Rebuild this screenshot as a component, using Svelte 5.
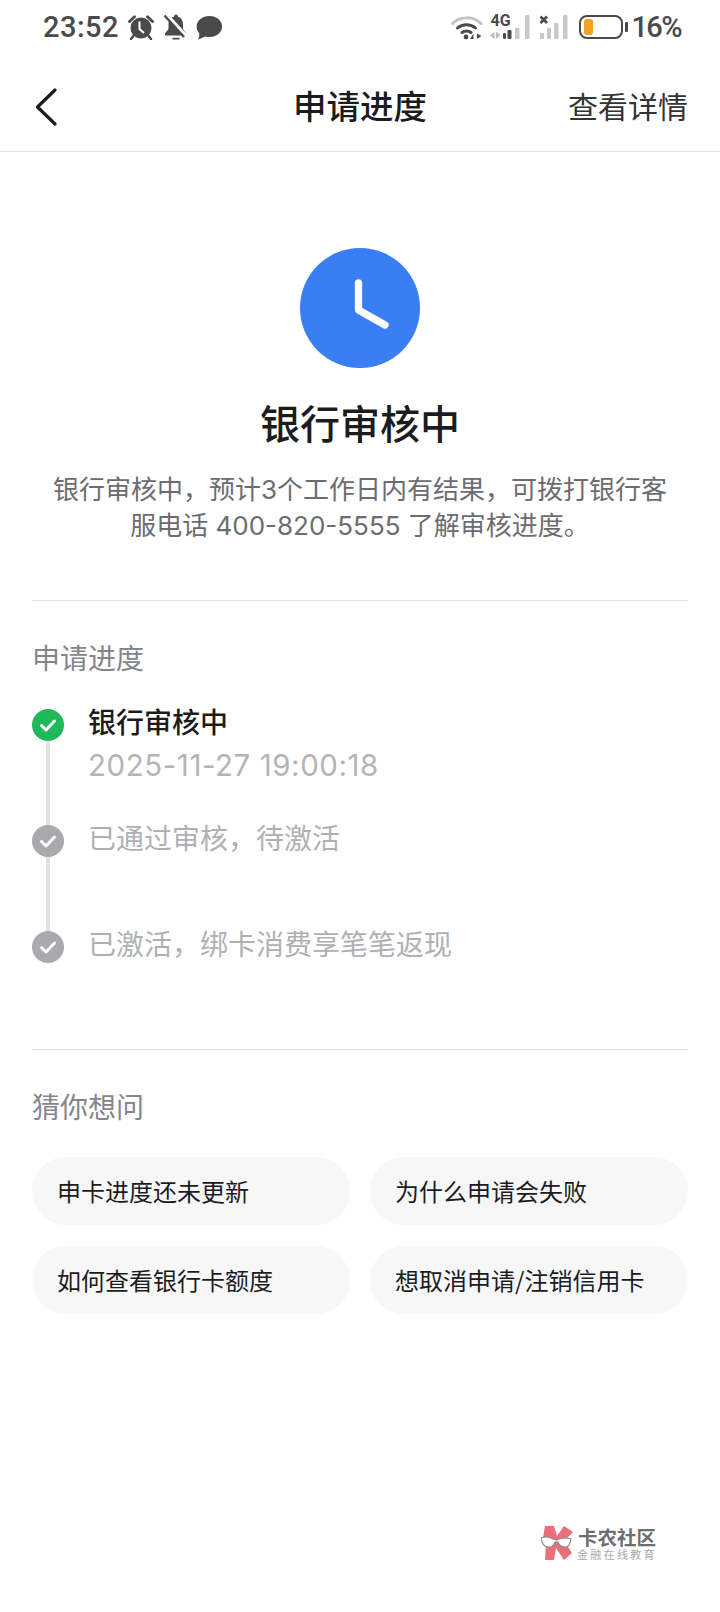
<script>
	const steps = [
		{ title: '银行审核中', time: '2025-11-27 19:00:18', active: true },
		{ title: '已通过审核，待激活', active: false },
		{ title: '已激活，绑卡消费享笔笔返现', active: false }
	];

	const questions = ['申卡进度还未更新', '为什么申请会失败', '如何查看银行卡额度', '想取消申请/注销信用卡'];
</script>

<div class="page">
	<div class="status">
		<div class="status-left">
			<span class="time">23:52</span>
			<svg class="ic-alarm" width="26" height="25" viewBox="0 0 26 25" fill="#4a4a4a">
				<circle cx="13" cy="13" r="10.500" />
				<path d="M1.500 6.500 6.500 1.800 M24.500 6.500 19.500 1.800" stroke="#4a4a4a" stroke-width="2.800" stroke-linecap="round" />
				<path d="M6 20 3 24 M20 20l3 4" stroke="#4a4a4a" stroke-width="2.400" stroke-linecap="round" />
				<path d="M11.500 6.500v7.500l4.500 4" stroke="#fff" stroke-width="2" fill="none" />
			</svg>
			<svg class="ic-bell" width="24" height="26" viewBox="0 0 24 26" fill="#4a4a4a">
				<circle cx="13" cy="2.500" r="2" />
				<path d="M13 2.500c-4.500 0-7.500 3.500-7.500 8v4.500L2 19.500v2h21v-2l-3-4.500v-4.500c0-4.500-2.500-8-7-8z" />
				<path d="M9.500 23.800h7v1.700h-7z" />
				<path d="M4 1 23 22" stroke="#fff" stroke-width="3.600" />
				<path d="M1.500 1.500 21 23" stroke="#4a4a4a" stroke-width="2.400" />
			</svg>
			<svg class="ic-chat" width="26" height="25" viewBox="0 0 26 25" fill="#4a4a4a">
				<path d="M13.500 1C20.500 1 26 5.300 26 11.500S20.500 22 13.500 22c-1.500 0-2.900-.2-4.200-.6L2 24.800c1.100-2.300 1.500-4.600 1.200-6.600C1.300 16.300 .6 14 .6 11.500.6 5.300 6.500 1 13.500 1z" />
			</svg>
		</div>
		<div class="status-right">
			<svg class="wifi" width="32" height="26" viewBox="0 0 32 26" fill="none" stroke-linecap="round">
				<path d="M1.500 9.500C8.500 2.500 22 1.500 30 9.500" stroke="#c2c2c2" stroke-width="3" />
				<path d="M6.500 14c5-4.500 13-4.500 18 0" stroke="#4a4a4a" stroke-width="3" />
				<path d="M11 18.500c2.500-2 6.500-2 9 0" stroke="#4a4a4a" stroke-width="3" />
				<circle cx="15" cy="23" r="2.400" fill="#4a4a4a" />
				<path d="M22.500 19.500 19 25h3.500zM26 19.500V25l4.500-3z" fill="#4a4a4a" />
			</svg>
			<div class="signal">
				<span class="net">4G</span>
				<svg width="42" height="26" viewBox="0 0 42 26">
					<path d="M1 21.500 5.500 17.500v7.500zM7 17.500v7.500l4.500-4z" fill="#bdbdbd" />
					<rect x="14" y="19" width="3" height="6" rx="1" fill="#4a4a4a" />
					<rect x="18.500" y="16" width="4" height="9" rx="1" fill="#4a4a4a" />
					<rect x="26" y="14" width="4.500" height="11" rx="1" fill="#c8c8c8" />
					<rect x="36" y="1" width="4.500" height="24" rx="1" fill="#c8c8c8" />
				</svg>
			</div>
			<svg class="sim2" width="30" height="26" viewBox="0 0 30 26" fill="#c8c8c8">
				<path d="M1.500 2.500l6.500 6.500M8 2.500l-6.500 6.500" stroke="#4a4a4a" stroke-width="2.600" />
				<rect x="1" y="19" width="4" height="6" rx="1" />
				<rect x="8" y="14" width="4" height="11" rx="1" />
				<rect x="15" y="9" width="4.500" height="16" rx="1" />
				<rect x="24" y="1" width="4.500" height="24" rx="1" />
			</svg>
			<div class="battery">
				<div class="battery-body"><div class="battery-fill"></div></div>
				<div class="battery-tip"></div>
			</div>
			<span class="percent">16%</span>
		</div>
	</div>

	<header class="nav">
		<svg class="back" width="22" height="38" viewBox="0 0 22 38" fill="none">
			<path d="M20 2 2.500 19 20 36" stroke="#1c1c1e" stroke-width="3.200" stroke-linecap="round" stroke-linejoin="round" />
		</svg>
		<h1>申请进度</h1>
		<span class="detail">查看详情</span>
	</header>

	<section class="result">
		<svg class="clock" width="120" height="120" viewBox="0 0 120 120">
			<circle cx="60" cy="60" r="60" fill="#3a7ef3" />
			<path d="M58.500 35v27l26.500 15" fill="none" stroke="#fff" stroke-width="7.300" stroke-linecap="round" stroke-linejoin="round" />
		</svg>
		<h2>银行审核中</h2>
		<p>银行审核中，预计3个工作日内有结果，可拨打银行客服电话 400-820-5555 了解审核进度。</p>
	</section>

	<section class="progress">
		<div class="label">申请进度</div>
		<ol class="steps">
			{#each steps as step, i}
				<li class="step" class:is-active={step.active}>
					<div class="rail">
						<svg width="32" height="32" viewBox="0 0 32 32">
							<circle cx="16" cy="16" r="16" fill={step.active ? '#1fb95a' : '#a9a9ae'} />
							<path d="M9.500 16.500l4.500 4.500 8.500-9" fill="none" stroke="#fff" stroke-width="3" stroke-linecap="round" stroke-linejoin="round" />
						</svg>
						{#if i < steps.length - 1}
							<div class="line"></div>
						{/if}
					</div>
					<div class="body">
						<div class="title">{step.title}</div>
						{#if step.time}
							<div class="stamp">{step.time}</div>
						{/if}
					</div>
				</li>
			{/each}
		</ol>
	</section>

	<section class="faq">
		<div class="label">猜你想问</div>
		<div class="chips">
			{#each questions as q}
				<div class="chip">{q}</div>
			{/each}
		</div>
	</section>

	<div class="mark">
		<svg width="34" height="36" viewBox="0 0 34 36">
			<path d="M4 1h9l3 10 7-10 9 6-9 9 8 12-8 7-8-12-2 12H4l1-15L2 13z" fill="#ea6f7a" />
			<path d="M0 13c5-2 9-1 12 1l4 1c3-2 8-3 14-1-1 5-2 8-6 8-4 0-6-2-7-5h-3c-1 3-3 6-7 5-4 0-6-4-7-9z" fill="#fff" stroke="#8c8c8c" stroke-width="1.200" />
		</svg>
		<div class="mark-text">
			<span class="mark-name">卡农社区</span>
			<span class="mark-sub">金融在线教育</span>
		</div>
	</div>
</div>

<style>
	:global(body) {
		margin: 0;
		background: #fff;
	}

	.page {
		position: relative;
		height: 1612px;
		overflow: hidden;
		background: #fff;
		font-family: 'Noto Sans CJK SC', 'Noto Sans', sans-serif;
		color: #1c1c1e;
	}

	.status {
		display: flex;
		justify-content: space-between;
		align-items: center;
		height: 54px;
		padding: 0 39px 0 43px;
	}
	.status-left,
	.status-right {
		display: flex;
		align-items: center;
	}
	.status-left {
		gap: 9px;
	}
	.time,
	.percent {
		font-family: Roboto, sans-serif;
		font-size: 29px;
		font-weight: 500;
		color: #4a4a4a;
	}
	.time {
		letter-spacing: 0.5px;
	}
	.percent {
		margin-left: 3px;
		letter-spacing: -1.600px;
	}
	.signal {
		position: relative;
		display: flex;
		margin-left: 6px;
	}
	.net {
		position: absolute;
		left: 1px;
		top: -3px;
		font-family: Roboto, sans-serif;
		font-size: 16px;
		font-weight: 700;
		color: #4a4a4a;
	}
	.sim2 {
		margin-left: 8px;
	}
	.battery {
		display: flex;
		align-items: center;
		gap: 2px;
		margin-left: 10px;
	}
	.battery-body {
		box-sizing: border-box;
		width: 44px;
		height: 24px;
		padding: 2px 3px;
		border: 2px solid #4a4a4a;
		border-radius: 8px;
	}
	.battery-fill {
		width: 9px;
		height: 100%;
		background: #f5a124;
		border-radius: 3px;
	}
	.battery-tip {
		width: 3px;
		height: 10px;
		background: #4a4a4a;
		border-radius: 1px;
	}

	.nav {
		display: grid;
		grid-template-columns: 1fr auto 1fr;
		align-items: center;
		box-sizing: border-box;
		height: 98px;
		padding: 4px 32px 0;
		border-bottom: 1px solid #e4e4e6;
	}
	.back {
		margin: 5px 0 0 3px;
	}
	.nav h1 {
		margin: 0;
		font-size: 33.500px;
		font-weight: 500;
	}
	.detail {
		justify-self: end;
		font-size: 30px;
		font-weight: 400;
		color: #333;
	}

	.result {
		display: flex;
		flex-direction: column;
		align-items: center;
		margin: 0 32px;
		padding: 96px 0 56px;
		border-bottom: 1px solid #e4e4e6;
	}
	.result h2 {
		margin: 25px 0 0;
		font-size: 40px;
		font-weight: 500;
		line-height: 58px;
	}
	.result p {
		margin: 21px 0 0;
		padding: 0 10px;
		font-family: Inter, 'Noto Sans CJK SC', sans-serif;
		font-size: 26px;
		line-height: 36px;
		text-align: center;
		color: #6c6c70;
	}

	.label {
		font-size: 28px;
		line-height: 40px;
		color: #85858a;
	}

	.progress {
		margin: 0 32px;
		padding: 36px 0 0;
		height: 449px;
		box-sizing: border-box;
		border-bottom: 1px solid #e4e4e6;
	}
	.steps {
		margin: 32px 0 0;
		padding: 0;
		list-style: none;
	}
	.step {
		display: flex;
		gap: 24px;
		height: 116px;
	}
	.step:nth-child(2) {
		height: 106px;
	}
	.step:last-child {
		height: 32px;
	}
	.rail {
		display: flex;
		flex-direction: column;
		align-items: center;
		width: 32px;
	}
	.line {
		flex: 1;
		width: 4px;
		background: #e2e2e4;
	}
	.body {
		margin-top: -3px;
	}
	.title {
		font-size: 28px;
		line-height: 30px;
		color: #b0b0b4;
	}
	.is-active .title {
		color: #1c1c1e;
		font-weight: 500;
	}
	.stamp {
		margin-top: 14px;
		font-family: Inter, sans-serif;
		font-size: 29.500px;
		letter-spacing: 0.55px;
		line-height: 30px;
		color: #b4b4b8;
	}

	.faq {
		margin: 0 32px;
		padding: 36px 0 0;
	}
	.chips {
		display: grid;
		grid-template-columns: 1fr 1fr;
		gap: 21px 20px;
		margin-top: 31px;
	}
	.chip {
		display: flex;
		align-items: center;
		box-sizing: border-box;
		height: 68px;
		padding: 0 24px 2px 25px;
		background: #f7f7f8;
		border-radius: 34px;
		font-size: 24px;
		color: #1c1c1e;
	}

	.mark {
		position: absolute;
		left: 541px;
		top: 1525px;
		display: flex;
		align-items: center;
		gap: 2px;
	}
	.mark-text {
		display: flex;
		flex-direction: column;
		align-items: center;
	}
	.mark-name {
		font-size: 19.500px;
		line-height: 22px;
		font-weight: 700;
		color: #6e6e70;
	}
	.mark-sub {
		font-size: 11px;
		line-height: 13px;
		letter-spacing: 2.300px;
		color: #a9a9ab;
	}
</style>
